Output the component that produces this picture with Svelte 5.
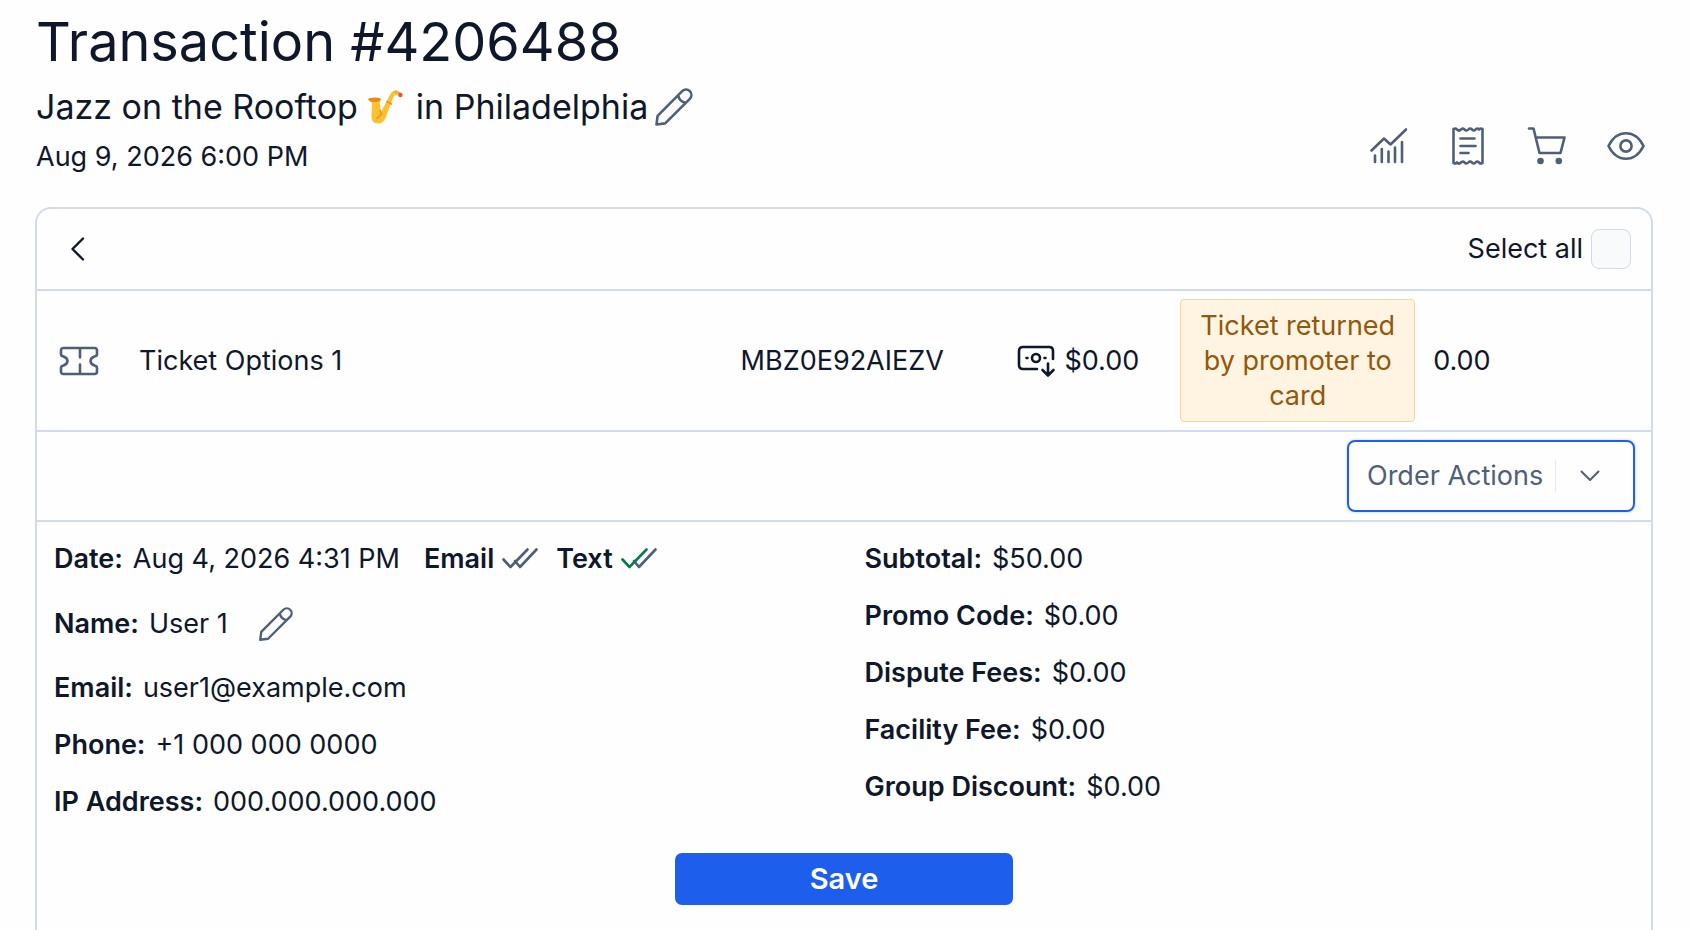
<script lang="ts">
	interface Line {
		label: string;
		value: string;
	}

	const title = 'Transaction #4206488';
	const date = 'Aug 9, 2026 6:00 PM';

	const contact: Line[] = [
		{ label: 'Email', value: 'user1@example.com' },
		{ label: 'Phone', value: '+1 000 000 0000' },
		{ label: 'IP Address', value: '000.000.000.000' }
	];

	const totals: Line[] = [
		{ label: 'Subtotal', value: '$50.00' },
		{ label: 'Promo Code', value: '$0.00' },
		{ label: 'Dispute Fees', value: '$0.00' },
		{ label: 'Facility Fee', value: '$0.00' },
		{ label: 'Group Discount', value: '$0.00' }
	];

	let selectAll = $state(false);
	let action = $state('');
</script>

{#snippet pencil()}
	<svg class="pencil" viewBox="0 0 40 40" aria-hidden="true">
		<path d="M2.5 37.5 L3.6 28.8 L28.2 4.2 A5.3 5.3 0 0 1 35.8 11.8 L11.2 36.4 Z M24.2 8.4 Q25.5 14.5 31.6 15.8" />
	</svg>
{/snippet}

{#snippet checks(first: string)}
	<svg class="checks" viewBox="0 0 36 22" aria-hidden="true">
		<path d="M13 13 L18 19 L34.5 1.5" />
		<path class={first} d="M1.5 11.5 L8.5 19 L25.5 1.5" />
	</svg>
{/snippet}

<div class="page">
	<header class="top">
		<div class="heading">
			<h1>{title}</h1>
			<p class="event">
				<span>Jazz on the Rooftop</span>
				<svg class="sax" viewBox="0 0 36 36" role="img" aria-label="Saxophone">
					<path
						d="M29 1.5 Q25 1.5 23.5 5 L14.5 22 Q13.6 23 13.3 21 L12.8 13 L14 10.5 Q7 8 1 10.5 L5 14 L4.5 28 Q5 34.5 10.5 34.5 Q16.5 34.5 18.5 29 L26 9 Q27 5.5 30 6 Z"
						fill="#fdc02e"
					/>
					<path d="M1 10.5 Q2.5 8.4 8 8.6 Q13.5 8.8 14 10.4 Q12 13 7.5 13 Q3.5 13 1 10.5 Z" fill="#e88b16" />
					<path d="M20 12.5 L24.5 15 M13 21 L14.5 25 L10 29.5" fill="none" stroke="#ea941d" stroke-width="1.6" />
					<path d="M29 2.8 L32.5 4.8" stroke="#f8ab25" stroke-width="3" />
					<circle cx="33.4" cy="6" r="2.2" fill="#e5573a" />
				</svg>
				<span>in Philadelphia</span>
				<button class="icon-button" type="button" aria-label="Edit event">{@render pencil()}</button>
			</p>
			<p class="date">{date}</p>
		</div>

		<nav class="tools" aria-label="Transaction tools">
			<button class="icon-button" type="button" aria-label="Statistics">
				<svg class="tool" viewBox="0 0 40 40" aria-hidden="true">
					<path d="M2.5 24.5 L15 12.5 L21.5 18.5 L37 3.5" />
					<path d="M6 29.5V36 M12.8 23V36 M19.5 25.5V36 M26 21.5V36 M33 16V36" />
				</svg>
			</button>
			<button class="icon-button" type="button" aria-label="Receipt">
				<svg class="tool" viewBox="0 0 40 40" aria-hidden="true">
					<path
						d="M5.5 3 Q8 2 9 3.5 Q11 5.5 13 3.5 Q14.5 1.5 16.5 3.5 Q18.5 5.5 20.3 3.5 Q22 1.5 24 3.5 Q26 5.5 27.5 3.5 Q29 1.5 31 3.500 Q32 2 34.5 3 V37 Q32 38 31 36.5 Q29 34.5 27.5 36.5 Q26 38.5 24 36.5 Q22 34.5 20.3 36.5 Q18.5 38.5 16.5 36.5 Q14.5 34.5 13 36.5 Q11 38.5 9 36.5 Q8 38 5.5 37 Z"
					/>
					<path d="M12.5 12.5H26.5 M12.5 20H27.5 M12.5 27H20.5" />
				</svg>
			</button>
			<button class="icon-button" type="button" aria-label="Cart">
				<svg class="tool" viewBox="0 0 40 40" aria-hidden="true">
					<path d="M2 2.5H6.5L12.5 27H33.5L37.5 11.5H9" />
					<circle class="dot" cx="13.5" cy="35" r="3.3" />
					<circle class="dot" cx="31.8" cy="35" r="3.3" />
				</svg>
			</button>
			<button class="icon-button" type="button" aria-label="View">
				<svg class="tool" viewBox="0 0 40 40" aria-hidden="true">
					<path d="M2.5 20 C11 3 29 3 37.5 20 C29 37 11 37 2.5 20 Z" />
					<circle cx="20" cy="20" r="5.6" />
				</svg>
			</button>
		</nav>
	</header>

	<main class="card">
		<div class="bar">
			<button class="icon-button" type="button" aria-label="Back">
				<svg class="back" viewBox="0 0 16 24" aria-hidden="true">
					<path d="M13 1.5 L2.5 12 L13 22.5" />
				</svg>
			</button>
			<label class="select-all">
				Select all
				<input type="checkbox" bind:checked={selectAll} />
			</label>
		</div>

		<div class="ticket">
			<svg class="ticket-icon" viewBox="0 0 40 30" aria-hidden="true">
				<path
					d="M4.5 2 H35.5 Q38 2 38 4.5 V8 Q38 10 35.5 10.5 Q31.5 12 31.5 15 Q31.5 18 35.5 19.5 Q38 20 38 22 V25.5 Q38 28 35.5 28 H4.5 Q2 28 2 25.5 V22 Q2 20 4.5 19.5 Q8.5 18 8.5 15 Q8.5 12 4.5 10.5 Q2 10 2 8 V4.5 Q2 2 4.5 2 Z M21 3 V11.5 M21 18.5 V27"
				/>
			</svg>
			<span>Ticket Options 1</span>
			<span>MBZ0E92AIEZV</span>
			<span class="price">
				<svg class="cash" viewBox="0 0 40 34" aria-hidden="true">
					<path d="M21 25 H7 Q3 25 3 21 V7 Q3 3 7 3 H33 Q37 3 37 7 V15" />
					<circle cx="20" cy="14" r="4" />
					<path d="M10.5 14 H11.5 M28.5 14 H29.5 M32 19.5 V31 M26.5 26 L32 31.5 L37.5 26" />
				</svg>
				$0.00
			</span>
			<span class="status">Ticket returned by promoter to card</span>
			<span class="amount">0.00</span>
		</div>

		<div class="actions">
			<div class="dropdown">
				<select aria-label="Order actions" bind:value={action}>
					<option value="">Order Actions</option>
				</select>
				<span class="indicator">
					<svg viewBox="0 0 20 12" aria-hidden="true">
						<path d="M1.5 1.5 L10 10 L18.5 1.5" />
					</svg>
				</span>
			</div>
		</div>

		<div class="details">
			<div class="column">
				<div class="line">
					<strong>Date:</strong>
					<span>Aug 4, 2026 4:31 PM</span>
					<span class="sent"><strong>Email</strong>{@render checks('pending')}</span>
					<span class="sent"><strong>Text</strong>{@render checks('delivered')}</span>
				</div>
				<div class="line name">
					<strong>Name:</strong>
					<span>User 1</span>
					<button class="icon-button" type="button" aria-label="Edit name">{@render pencil()}</button>
				</div>
				{#each contact as line}
					<div class="line"><strong>{line.label}:</strong><span>{line.value}</span></div>
				{/each}
			</div>
			<div class="column">
				{#each totals as line}
					<div class="line"><strong>{line.label}:</strong><span>{line.value}</span></div>
				{/each}
			</div>
		</div>

		<button class="save" type="button">Save</button>
	</main>
</div>

<style>
	:global(body) {
		background: #fefefe;
	}

	.page {
		--ink: #0f172a;
		--muted: #505f78;
		--line: #d2dbea;
		--blue: #1d5eed;
		box-sizing: border-box;
		display: flex;
		flex-direction: column;
		min-height: 100vh;
		padding: 10px 38px 0 35px;
		font-family: Inter, 'Liberation Sans', sans-serif;
		font-size: 27px;
		line-height: 34px;
		color: var(--ink);
	}

	h1,
	p {
		margin: 0;
		font-weight: 400;
	}

	svg {
		display: block;
		flex: none;
		fill: none;
		stroke: currentColor;
		stroke-width: 2.6;
		stroke-linecap: round;
		stroke-linejoin: round;
	}

	strong {
		font-weight: 600;
	}

	.icon-button {
		padding: 0;
		border: 0;
		background: none;
		color: var(--muted);
		cursor: pointer;
	}

	.top {
		display: flex;
		justify-content: space-between;
		align-items: flex-end;
		margin-bottom: 33px;
	}

	.heading {
		display: flex;
		flex-direction: column;
		gap: 13px;
		padding-left: 1px;
	}

	h1 {
		font-size: 54px;
		line-height: 64px;
	}

	.event {
		display: flex;
		align-items: center;
		font-size: 34px;
		line-height: 40px;
	}

	.sax {
		width: 36px;
		height: 36px;
		margin: 0 13px 0 9px;
		stroke: none;
	}

	.event .icon-button {
		margin-left: 6px;
	}

	.pencil {
		width: 40px;
		height: 40px;
	}

	.tools {
		display: flex;
		gap: 39px;
		padding: 0 7px 8px 0;
	}

	.tool {
		width: 40px;
		height: 40px;
	}

	.dot {
		fill: currentColor;
		stroke: none;
	}

	.card {
		flex: 1;
		display: flex;
		flex-direction: column;
		border: 2px solid var(--line);
		border-bottom: 0;
		border-radius: 16px 16px 0 0;
	}

	.bar {
		display: flex;
		justify-content: space-between;
		align-items: center;
		padding: 20px 20px 20px 33px;
		border-bottom: 2px solid var(--line);
	}

	.back {
		width: 16px;
		height: 24px;
		color: var(--ink);
		stroke-width: 2.4;
	}

	.select-all {
		display: flex;
		align-items: center;
		gap: 8px;
	}

	.select-all input {
		appearance: none;
		box-sizing: border-box;
		width: 40px;
		height: 40px;
		margin: 0;
		border: 1px solid var(--line);
		border-radius: 8px;
		background: #f8fafc;
	}

	.ticket {
		display: grid;
		grid-template-columns: 102px 602fr 276fr 164fr 235fr 236fr;
		align-items: center;
		padding: 8px 0;
		border-bottom: 2px solid var(--line);
	}

	.ticket-icon {
		width: 40px;
		height: 30px;
		margin-left: 22px;
		color: var(--muted);
	}

	.price {
		display: flex;
		align-items: center;
		gap: 8px;
	}

	.cash {
		width: 40px;
		height: 34px;
	}

	.status {
		padding: 8px 16px;
		border: 1px solid #f3d6a0;
		border-radius: 4px;
		background: #fff4e1;
		color: #92580c;
		line-height: 35px;
		text-align: center;
	}

	.amount {
		padding-left: 18px;
	}

	.actions {
		display: flex;
		justify-content: flex-end;
		padding: 8px 16px;
		border-bottom: 2px solid var(--line);
	}

	.dropdown {
		display: grid;
		width: 288px;
	}

	.dropdown select,
	.indicator {
		grid-area: 1 / 1;
	}

	.dropdown select {
		appearance: none;
		height: 72px;
		padding: 0 80px 0 18px;
		border: 2px solid var(--blue);
		border-radius: 8px;
		background: transparent;
		box-shadow: 0 0 3px #bcd0fb;
		color: var(--muted);
		font: inherit;
	}

	.indicator {
		display: flex;
		align-items: center;
		justify-self: end;
		align-self: center;
		height: 32px;
		margin-right: 35px;
		padding-left: 24px;
		border-left: 1px solid #e2e8f0;
		color: var(--muted);
		pointer-events: none;
	}

	.indicator svg {
		width: 20px;
		height: 12px;
		stroke-width: 2;
	}

	.details {
		display: grid;
		grid-template-columns: 1fr 1fr;
		column-gap: 24px;
		padding: 20px 0 0 17px;
	}

	.column {
		display: flex;
		flex-direction: column;
		gap: 23px;
	}

	.line {
		display: flex;
		align-items: center;
		gap: 10px;
	}

	.sent {
		display: flex;
		align-items: center;
		gap: 8px;
		margin-left: 14px;
	}

	.sent + .sent {
		margin-left: 8px;
	}

	.checks {
		width: 36px;
		height: 22px;
		color: var(--muted);
	}

	.delivered {
		stroke: #0b7a4b;
	}

	.name {
		height: 49px;
	}

	.name .icon-button {
		margin-left: 20px;
	}

	.name .pencil {
		width: 36px;
		height: 36px;
	}

	.save {
		align-self: center;
		width: 338px;
		height: 52px;
		margin: 34px 0 24px;
		border: 0;
		border-radius: 7px;
		background: var(--blue);
		color: #fff;
		font: inherit;
		font-size: 29px;
		font-weight: 600;
		cursor: pointer;
	}
</style>
